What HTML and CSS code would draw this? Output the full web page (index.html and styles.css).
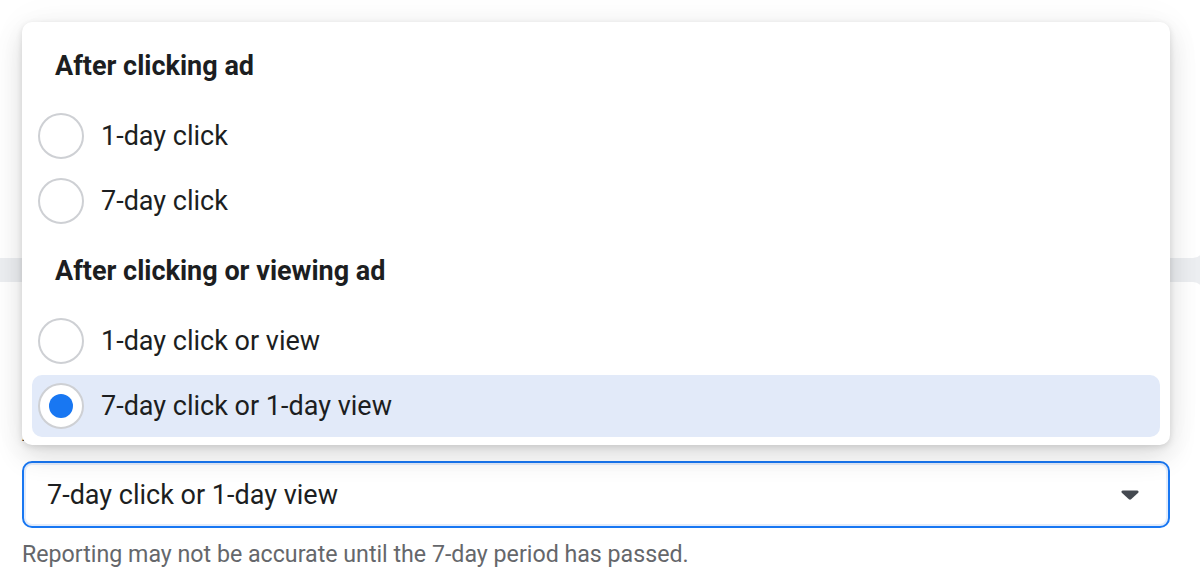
FILE: index.html
```html
<!DOCTYPE html>
<html lang="en">
<head>
<meta charset="utf-8">
<title>Attribution setting</title>
<link rel="stylesheet" href="styles.css">
</head>
<body>
<div class="page">
  <div class="card card-top"></div>
  <div class="card card-bottom">
    <div class="field-label">Attribution setting</div>
    <div class="select">
      <span class="select-value">7-day click or 1-day view</span>
      <svg class="caret" width="18" height="10" viewBox="0 0 18 10"><path d="M1.8 0.5h14.4c1.2 0 1.8 1.4 1 2.2l-7.1 6.6c-0.6 0.5-1.6 0.5-2.2 0L0.8 2.7C0 1.9 0.6 0.5 1.8 0.5z" fill="#444950"/></svg>
    </div>
    <div class="helper">Reporting may not be accurate until the 7-day period has passed.</div>
  </div>

  <div class="menu">
    <div class="menu-heading first">After clicking ad</div>
    <div class="option"><span class="radio"></span><span class="option-label">1-day click</span></div>
    <div class="option"><span class="radio"></span><span class="option-label">7-day click</span></div>
    <div class="menu-heading second">After clicking or viewing ad</div>
    <div class="option"><span class="radio"></span><span class="option-label">1-day click or view</span></div>
    <div class="option selected"><span class="radio checked"></span><span class="option-label">7-day click or 1-day view</span></div>
  </div>
</div>
</body>
</html>
```

FILE: styles.css
```css
* { box-sizing: border-box; }
html, body {
  margin: 0;
  padding: 0;
  width: 1200px;
  height: 577px;
  overflow: hidden;
  background: #eceef1;
  font-family: Roboto, "Liberation Sans", Arial, sans-serif;
  color: #1c1e21;
}
.page {
  position: relative;
  width: 1200px;
  height: 577px;
  display: flex;
  flex-direction: column;
  gap: 24px;
}
.card {
  background: #ffffff;
  margin: 0 -3px 0 -20px;
  border-radius: 10px;
}
.card-top {
  height: 278px;
  margin-top: -20px;
}
.card-bottom {
  flex: 1;
  padding: 140px 33px 0 42px;
  margin-bottom: -20px;
}
.field-label {
  height: 39px;
  font-size: 21px;
  color: #1c1e21;
}
.select {
  height: 67px;
  border: 2px solid #1877f2;
  border-radius: 10px;
  box-shadow: inset 0 0 0 2px #e3ecfb;
  display: flex;
  align-items: center;
  padding: 0 29px 0 23px;
}
.select-value {
  flex: 1;
  font-size: 27px;
  color: #1c1e21;
}
.caret { display: block; }
.helper {
  margin-top: 12px;
  font-size: 23.2px;
  color: #65676b;
  white-space: nowrap;
}
.menu {
  position: absolute;
  top: 22px;
  left: 22px;
  width: 1148px;
  background: #ffffff;
  border-radius: 10px;
  padding: 8px 10px 8px 10px;
  box-shadow: 0 12px 28px 0 rgba(0,0,0,0.12), 0 2px 6px 0 rgba(0,0,0,0.12), 0 0 40px 0 rgba(0,0,0,0.04);
  display: flex;
  flex-direction: column;
}
.menu-heading {
  display: flex;
  align-items: center;
  padding-left: 23px;
  font-size: 27px;
  font-weight: 700;
  color: #1c1e21;
}
.menu-heading.first { height: 72px; margin-bottom: 3px; }
.menu-heading.second { height: 78px; }
.option {
  height: 62px;
  display: flex;
  align-items: center;
  padding-left: 6px;
  border-radius: 10px;
}
.option + .option { margin-top: 3px; }
.option.selected { background: #e2eaf9; }
.radio {
  width: 46px;
  height: 46px;
  border-radius: 50%;
  border: 2px solid #ced0d4;
  background: #ffffff;
  display: flex;
  align-items: center;
  justify-content: center;
  flex-shrink: 0;
}
.radio.checked::after {
  content: "";
  width: 24px;
  height: 24px;
  border-radius: 50%;
  background: #1877f2;
}
.option-label {
  margin-left: 17px;
  font-size: 27px;
  color: #1c1e21;
}
```
